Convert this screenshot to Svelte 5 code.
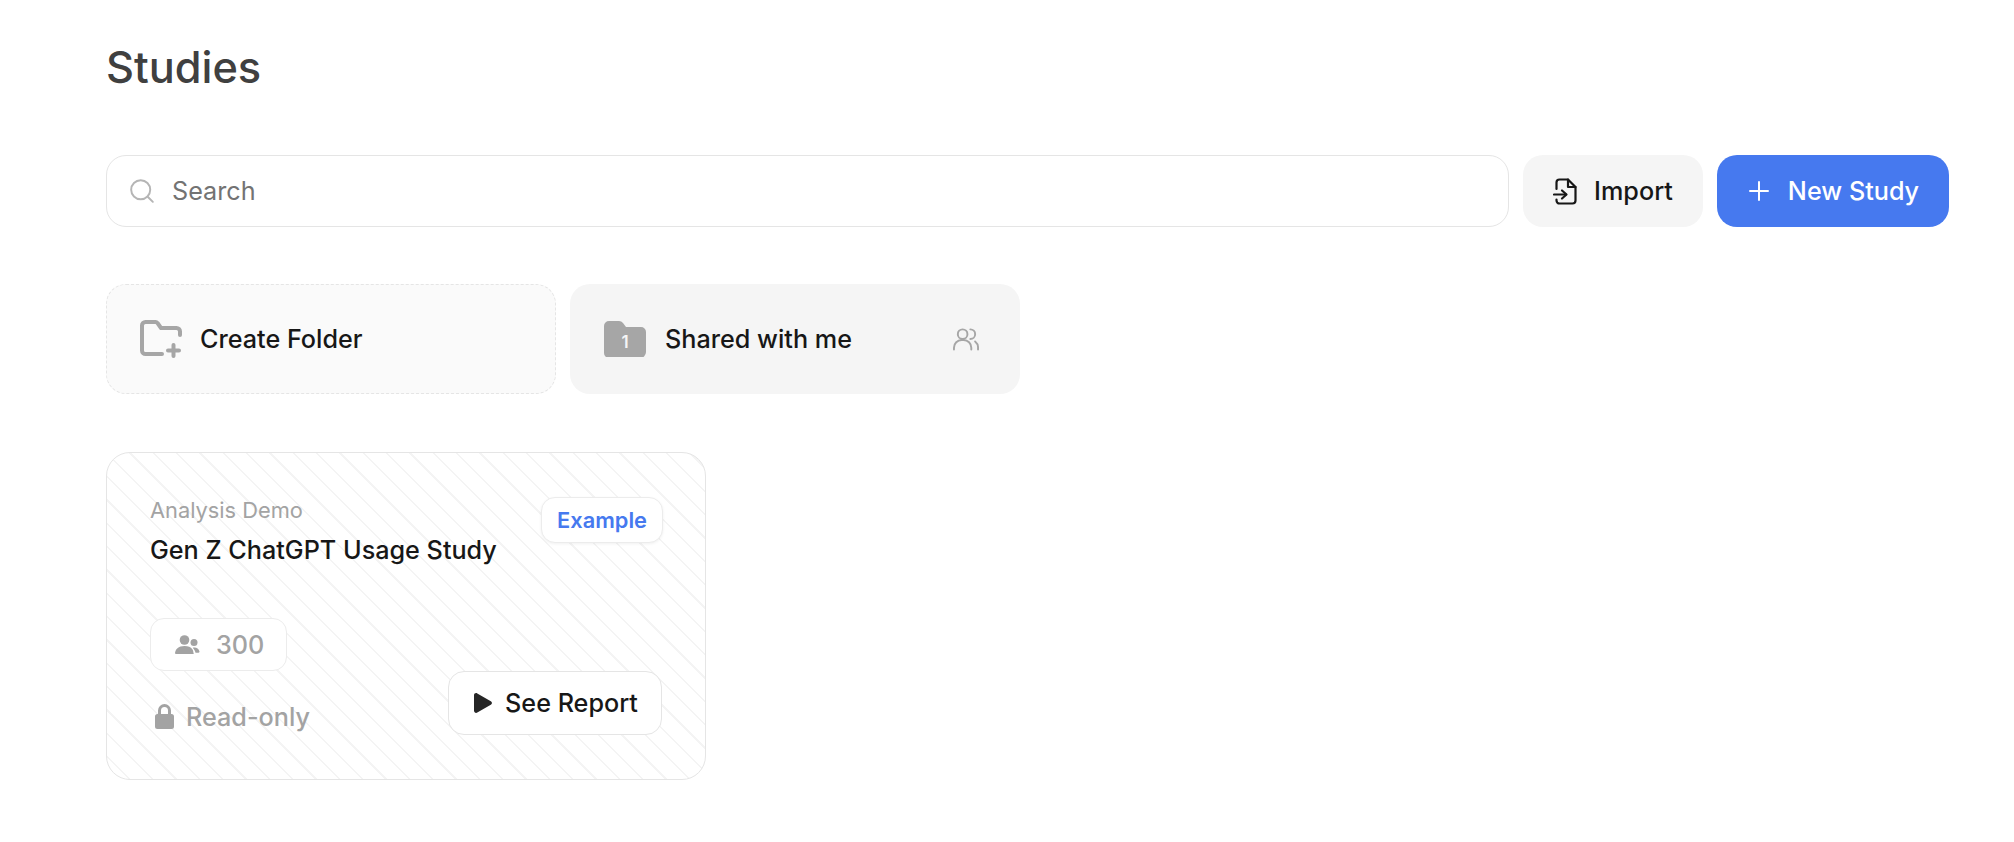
<script>
  const title = 'Studies';
</script>

<main class="page">
  <h1>{title}</h1>

  <div class="toolbar">
    <label class="search">
      <svg class="search-icon" viewBox="0 0 24 24" fill="none" stroke="currentColor" stroke-width="1.8" stroke-linecap="round"><circle cx="10.800" cy="10.800" r="8.800" /><path d="M17.500 17.500 22 22" /></svg>
      <span>Search</span>
    </label>
    <button class="btn import">
      <svg viewBox="0 0 24 27" fill="none" stroke="currentColor" stroke-width="2.2" stroke-linecap="round" stroke-linejoin="round"><path d="M3.500 11V4.500A3 3 0 0 1 6.500 1.500H15l7.500 7.500v13.500a3 3 0 0 1-3 3h-13a3 3 0 0 1-3-3V21.500" /><path d="M15 1.500V9h7.500" /><path d="M1 16.500h12" /><path d="m9 12.500 4.500 4-4.500 4" /></svg>
      Import
    </button>
    <button class="btn new">
      <svg viewBox="0 0 24 24" fill="none" stroke="currentColor" stroke-width="2" stroke-linecap="round"><path d="M12 3v18M3 12h18" /></svg>
      New Study
    </button>
  </div>

  <div class="folders">
    <div class="folder create">
      <svg class="f-icon" viewBox="0 0 42 38" fill="none" stroke="#a6a6a6" stroke-width="4" stroke-linecap="round" stroke-linejoin="round"><path d="M40 15v-3.500A3.500 3.500 0 0 0 36.500 8H21l-3.500-5a3 3 0 0 0-2-1H5.500A3.500 3.500 0 0 0 2 5.500v25A3.500 3.500 0 0 0 5.500 34H22" /><path d="M33.500 25v11M28 30.500h11" /></svg>
      <span>Create Folder</span>
    </div>
    <div class="folder shared">
      <div class="shared-folder">
        <svg viewBox="0 0 42 36"><path fill="#a6a6a6" d="M0 5a5 5 0 0 1 5-5h10a5 5 0 0 1 4 2l3 4h15a5 5 0 0 1 5 5v20a6 6 0 0 1-6 6H5a5 5 0 0 1-5-5z" /></svg>
        <b>1</b>
      </div>
      <span>Shared with me</span>
      <svg class="users" viewBox="0 0 27 24" fill="none" stroke="#a6a6a6" stroke-width="2" stroke-linecap="round"><circle cx="10" cy="7" r="5" /><path d="M1 23v-2a8 8 0 0 1 8-8h2a8 8 0 0 1 8 8v2" /><path d="M18 2a5 5 0 0 1 0 10" /><path d="M23 14.500a8 8 0 0 1 3 6.500v2" /></svg>
    </div>
  </div>

  <article class="study">
    <div class="head">
      <div>
        <div class="kicker">Analysis Demo</div>
        <div class="name">Gen Z ChatGPT Usage Study</div>
      </div>
      <div class="tag">Example</div>
    </div>
    <div class="foot">
      <div class="meta">
        <div class="count">
          <svg viewBox="0 0 25 20" fill="#a3a3a3"><circle cx="9.500" cy="5" r="4.800" /><path d="M0 19c0-5 3.500-8 9.500-8 3.700 0 6.300 1.200 7.900 3.200.8 1 .9 3 1.400 4.800H1a1 1 0 0 1-1-1z" /><circle cx="19" cy="7.500" r="3.500" /><path d="M17.700 12.800c3-1 6 .6 6.800 3.700.2.800-.8 1.300-1.500 1.300h-2.500c-.3-1.600-1.400-3.600-2.800-5z" /></svg>
          300
        </div>
        <div class="readonly">
          <svg viewBox="0 0 19 25" fill="#a3a3a3"><path d="M3 10V6.500a6.500 6.500 0 0 1 13 0V10h.5a2.500 2.500 0 0 1 2.500 2.500v10a2.500 2.500 0 0 1-2.500 2.500h-14A2.500 2.500 0 0 1 0 22.500v-10A2.500 2.500 0 0 1 2.500 10zm3 0h7V6.500a3.500 3.500 0 0 0-7 0z" /></svg>
          Read-only
        </div>
      </div>
      <button class="report">
        <svg viewBox="0 0 18 20" fill="#262626"><path d="M0 2.200C0 .5 1.800-.5 3.300.4l13.500 7.800c1.500.8 1.500 2.800 0 3.600L3.300 19.600C1.800 20.500 0 19.500 0 17.800z" /></svg>
        See Report
      </button>
    </div>
  </article>
</main>

<style>
  :global(body) {
    margin: 0;
    background: #fff;
    font-family: Inter, "Liberation Sans", sans-serif;
    color: #171717;
  }
  .page {
    padding: 40px 65px 0 106px;
  }
  h1 {
    margin: 0;
    font-size: 43.300px;
    line-height: 54px;
    font-weight: 450;
    color: #404040;
  }
  .toolbar {
    display: flex;
    gap: 14px;
    margin-top: 61px;
    height: 72px;
  }
  .search {
    flex: 1;
    display: flex;
    align-items: center;
    gap: 17px;
    padding-left: 22px;
    border: 1px solid #e5e5e5;
    border-radius: 20px;
    font-size: 25.200px;
    font-weight: 400;
    color: #737373;
  }
  .search-icon {
    width: 26px;
    height: 26px;
    color: #b5b5b5;
  }
  .btn {
    display: flex;
    align-items: center;
    justify-content: center;
    border: 0;
    border-radius: 20px;
    font: 450 25.200px Inter, sans-serif;
    padding: 0;
  }
  .btn svg {
    width: 24px;
    height: 24px;
  }
  .import {
    width: 180px;
    gap: 17px;
    background: #f5f5f5;
    color: #171717;
  }
  .import svg {
    height: 27px;
    width: 24px;
  }
  .new {
    width: 232px;
    gap: 17px;
    background: #4679ef;
    color: #fff;
  }
  .folders {
    display: flex;
    gap: 14px;
    margin-top: 57px;
  }
  .folder {
    width: 450px;
    height: 110px;
    box-sizing: border-box;
    display: flex;
    align-items: center;
    padding-left: 33px;
    border-radius: 20px;
    font-size: 25.200px;
    font-weight: 450;
    color: #171717;
  }
  .create {
    background: #fafafa;
    border: 1px dashed #e5e5e5;
  }
  .create span {
    margin-left: 18px;
  }
  .f-icon {
    width: 42px;
    height: 38px;
  }
  .shared {
    background: #f5f5f5;
    padding-left: 34px;
    padding-right: 41px;
  }
  .shared span {
    margin-left: 19px;
    flex: 1;
  }
  .shared-folder {
    position: relative;
    width: 42px;
    height: 36px;
  }
  .shared-folder svg {
    width: 42px;
    height: 36px;
    display: block;
  }
  .shared-folder b {
    position: absolute;
    left: 0;
    right: 0;
    top: 11px;
    text-align: center;
    color: #f5f5f5;
    font-size: 17px;
    line-height: 20px;
    font-weight: 600;
  }
  .users {
    width: 26px;
    height: 24px;
  }
  .study {
    width: 600px;
    height: 328px;
    box-sizing: border-box;
    margin-top: 58px;
    padding: 44px 43px 44px 43px;
    border: 1px solid #e5e5e5;
    border-radius: 24px;
    display: flex;
    flex-direction: column;
    justify-content: space-between;
    background: repeating-linear-gradient(45deg, #fff 0, #fff 15px, #f4f4f4 15px, #f4f4f4 16.500px);
  }
  .head {
    display: flex;
    justify-content: space-between;
    align-items: flex-start;
  }
  .kicker {
    margin-top: 1px;
    font-size: 21.800px;
    line-height: 24px;
    font-weight: 400;
    color: #a3a3a3;
  }
  .name {
    margin-top: 14px;
    font-size: 25.200px;
    line-height: 28px;
    font-weight: 450;
    color: #171717;
  }
  .tag {
    padding: 0 15px;
    height: 46px;
    margin-right: -1px;
    line-height: 44px;
    box-sizing: border-box;
    background: #fff;
    border: 1px solid #ececec;
    border-radius: 14px;
    box-shadow: 0 1px 3px rgba(0, 0, 0, .06);
    color: #4679ef;
    font-size: 21.800px;
    font-weight: 600;
  }
  .foot {
    display: flex;
    justify-content: space-between;
    align-items: flex-end;
  }
  .meta {
    padding-bottom: 3px;
  }
  .count {
    width: 137px;
    height: 53px;
    box-sizing: border-box;
    display: flex;
    align-items: center;
    gap: 16px;
    padding-left: 24px;
    background: #fff;
    border: 1px solid #ececec;
    border-radius: 14px;
    font-size: 25.200px;
    font-weight: 450;
    color: #a3a3a3;
  }
  .count svg {
    width: 25px;
    height: 20px;
  }
  .readonly {
    display: flex;
    align-items: center;
    gap: 12px;
    margin-top: 31px;
    padding-left: 5px;
    font-size: 25.200px;
    font-weight: 450;
    line-height: 30px;
    color: #a3a3a3;
  }
  .readonly svg {
    width: 19px;
    height: 25px;
    margin-top: -2px;
  }
  .report {
    width: 214px;
    height: 64px;
    display: flex;
    align-items: center;
    justify-content: center;
    gap: 13px;
    padding: 0 0 0 2px;
    background: #fff;
    border: 1px solid #e5e5e5;
    border-radius: 16px;
    font: 450 25.200px Inter, sans-serif;
    color: #171717;
  }
  .report svg {
    width: 18px;
    height: 20px;
  }
</style>
